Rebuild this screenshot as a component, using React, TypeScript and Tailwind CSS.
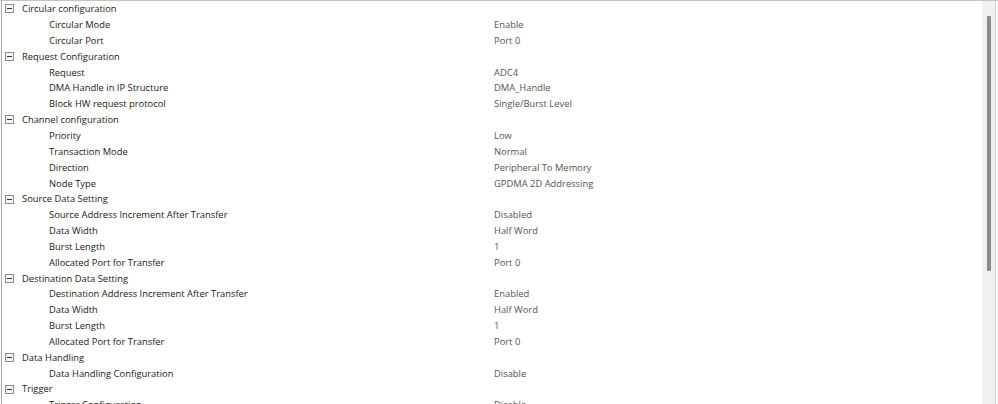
import React from "react";

type Row = { h?: string; l?: string; v?: string };

const rows: Row[] = [
  { h: "Circular configuration" },
  { l: "Circular Mode", v: "Enable" },
  { l: "Circular Port", v: "Port 0" },
  { h: "Request Configuration" },
  { l: "Request", v: "ADC4" },
  { l: "DMA Handle in IP Structure", v: "DMA_Handle" },
  { l: "Block HW request protocol", v: "Single/Burst Level" },
  { h: "Channel configuration" },
  { l: "Priority", v: "Low" },
  { l: "Transaction Mode", v: "Normal" },
  { l: "Direction", v: "Peripheral To Memory" },
  { l: "Node Type", v: "GPDMA 2D Addressing" },
  { h: "Source Data Setting" },
  { l: "Source Address Increment After Transfer", v: "Disabled" },
  { l: "Data Width", v: "Half Word" },
  { l: "Burst Length", v: "1" },
  { l: "Allocated Port for Transfer", v: "Port 0" },
  { h: "Destination Data Setting" },
  { l: "Destination Address Increment After Transfer", v: "Enabled" },
  { l: "Data Width", v: "Half Word" },
  { l: "Burst Length", v: "1" },
  { l: "Allocated Port for Transfer", v: "Port 0" },
  { h: "Data Handling" },
  { l: "Data Handling Configuration", v: "Disable" },
  { h: "Trigger" },
  { l: "Trigger Configuration", v: "Disable" },
];

function Minus() {
  return (
    <svg width="9" height="9" viewBox="0 0 9 9" className="shrink-0">
      <rect x="0.5" y="0.5" width="8" height="8" fill="#f7f7f7" stroke="#8c8c8c" />
      <line x1="2" y1="4.5" x2="7" y2="4.5" stroke="#333" strokeWidth="1" />
    </svg>
  );
}

export default function App() {
  return (
    <div
      className="w-[998px] h-[404px] overflow-hidden bg-white flex border-t border-[#c4c4c4]"
      style={{ fontFamily: '"Open Sans", "Noto Sans", sans-serif' }}
    >
      <div className="w-[1px] shrink-0" />
      <div className="flex-1 border-l border-[#a8a8a8] flex flex-col">
        {rows.map((r, i) =>
          r.h ? (
            <div key={i} className="h-[15.85px] shrink-0 flex items-center text-[9.4px] text-[#1a1a1a] leading-none">
              <div className="w-[3px] shrink-0" />
              <Minus />
              <span className="ml-[8px] whitespace-nowrap">{r.h}</span>
            </div>
          ) : (
            <div key={i} className="h-[15.85px] shrink-0 flex items-center text-[9.4px] leading-none">
              <span className="pl-[47px] w-[492px] shrink-0 whitespace-nowrap text-[#1a1a1a]">{r.l}</span>
              <span className="whitespace-nowrap text-[#555555]">{r.v}</span>
            </div>
          )
        )}
      </div>
      <div className="w-[13px] shrink-0 bg-[#f0f0f0] flex justify-center pt-[15px]">
        <div className="w-[4px] h-[255px] bg-[#8a8a8a] rounded-[1px]" />
      </div>
      <div className="w-[1px] shrink-0 bg-[#d0d0d0]" />
      <div className="w-[2px] shrink-0 bg-white" />
    </div>
  );
}
